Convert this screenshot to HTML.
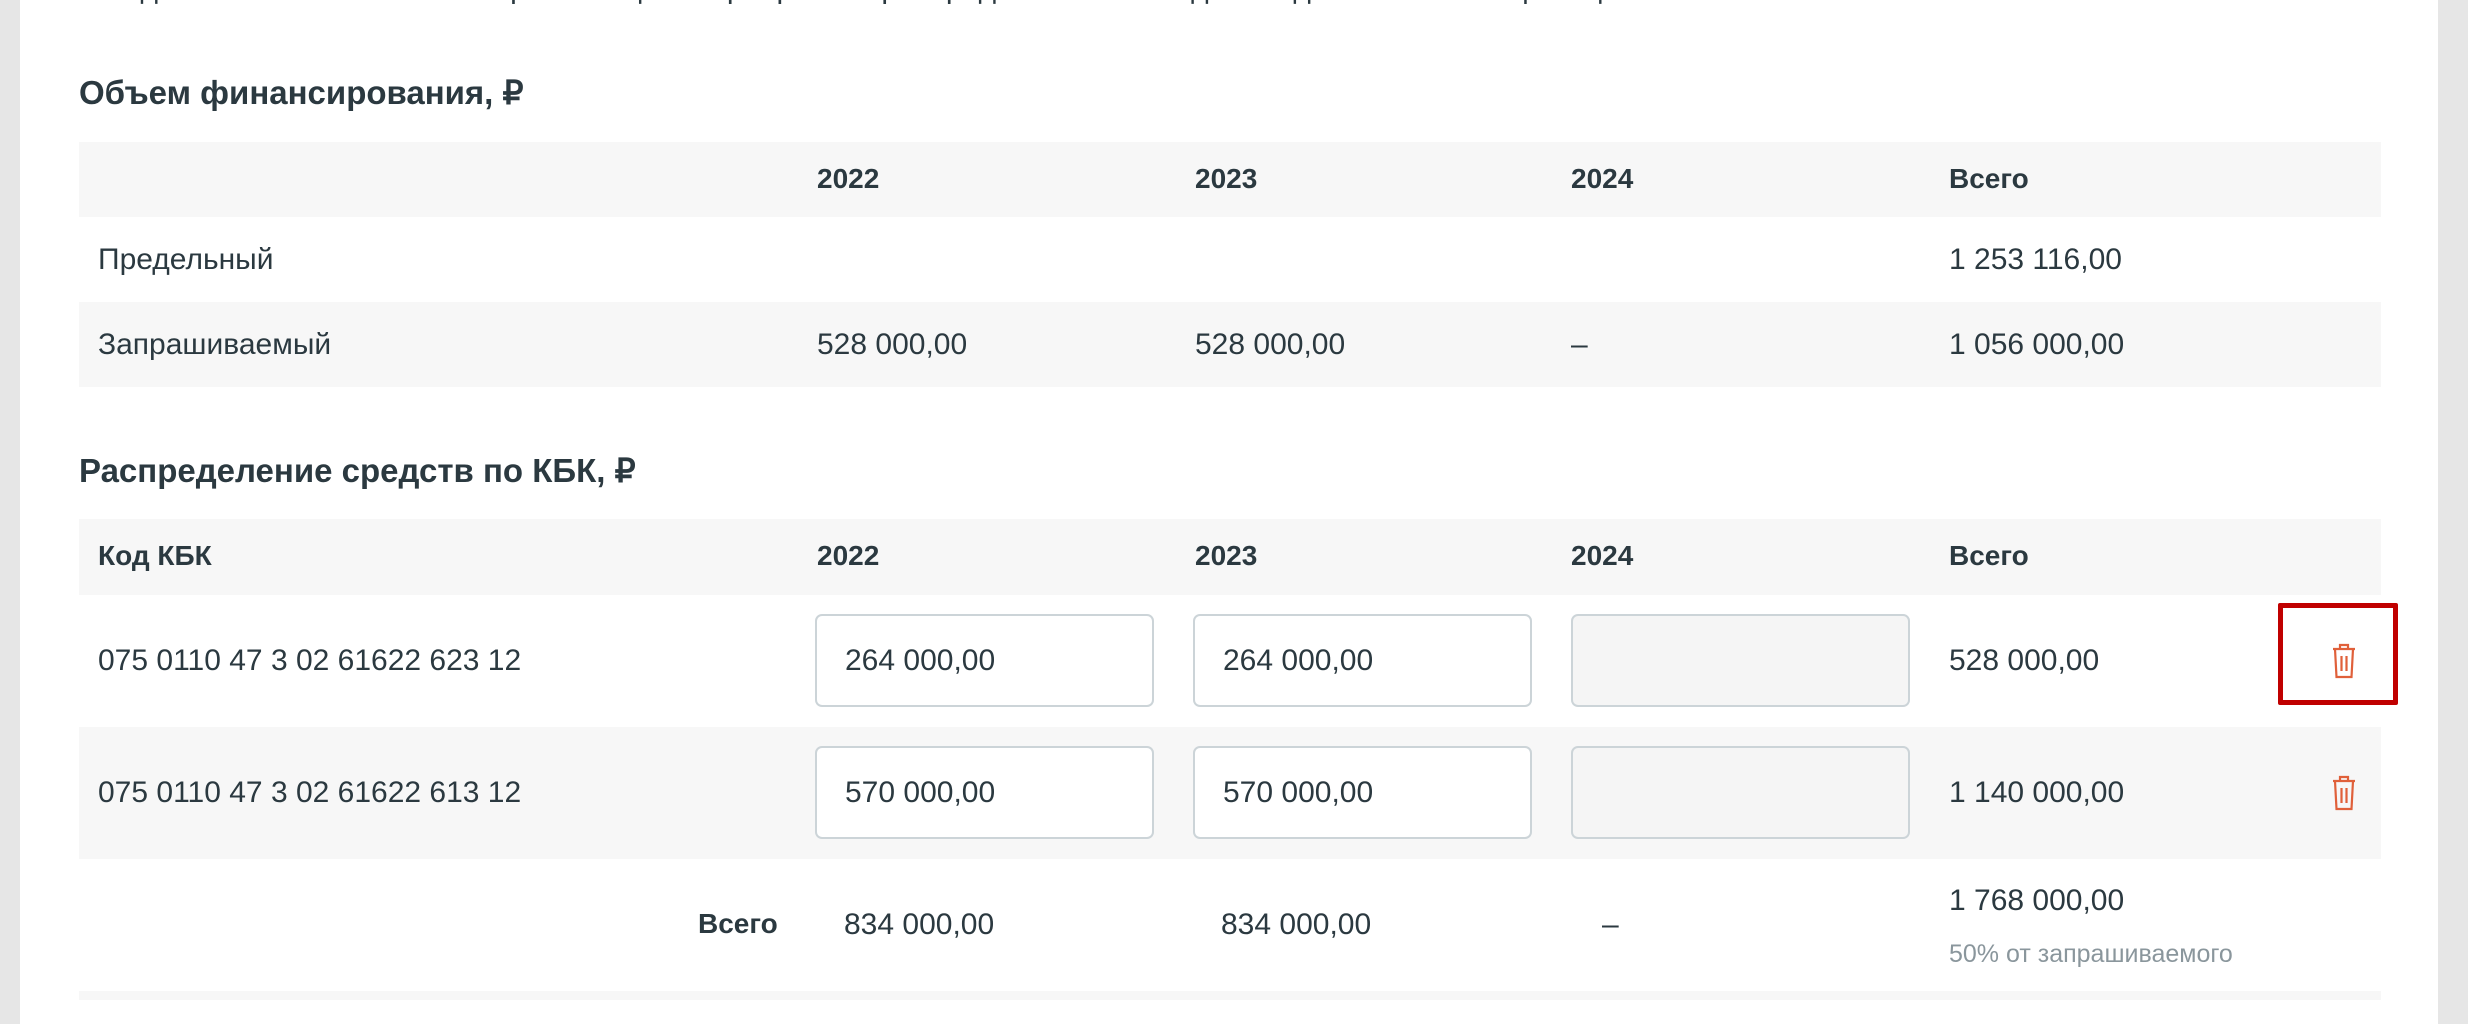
<!DOCTYPE html>
<html><head><meta charset="utf-8"><style>
*{margin:0;padding:0;box-sizing:border-box}
body{width:2468px;height:1024px;background:#e6e6e6;font-family:"Liberation Sans",sans-serif;color:#2b3940;position:relative;overflow:hidden}
.card{position:absolute;left:20px;top:0;width:2418px;height:1024px;background:#fff}
.a{position:absolute;white-space:nowrap}
.t{font-weight:bold;font-size:33px}
.b{font-size:30px}
.h{font-weight:bold;font-size:28px}
.g{background:#f7f7f7;position:absolute;left:79px;width:2302px}
.in{position:absolute;width:339px;height:93px;border:2px solid #ccd4d8;border-radius:7px;background:#fff;font-size:30px;padding-left:28px;line-height:89px}
.in.d{background:#f5f5f5}
</style></head><body>
<div class="card">
<div class="a b" style="left:79px;top:-28px;color:#2b3940">Бюджетные ассигнования на реализацию мероприятия распределяются по кодам бюджетной классификации</div>
<div class="a t" style="left:59px;top:73px">Объем финансирования, ₽</div>
<div class="g" style="top:142px;height:75px;left:59px"></div>
<div class="g" style="top:302px;height:85px;left:59px"></div>
<div class="a h" style="left:797px;top:163px">2022</div>
<div class="a h" style="left:1175px;top:163px">2023</div>
<div class="a h" style="left:1551px;top:163px">2024</div>
<div class="a h" style="left:1929px;top:163px">Всего</div>
<div class="a b" style="left:78px;top:243px">Предельный</div>
<div class="a b" style="left:1929px;top:243px">1 253 116,00</div>
<div class="a b" style="left:78px;top:328px">Запрашиваемый</div>
<div class="a b" style="left:797px;top:328px">528 000,00</div>
<div class="a b" style="left:1175px;top:328px">528 000,00</div>
<div class="a b" style="left:1551px;top:328px">–</div>
<div class="a b" style="left:1929px;top:328px">1 056 000,00</div>

<div class="a t" style="left:59px;top:451px">Распределение средств по КБК, ₽</div>
<div class="g" style="top:519px;height:76px;left:59px"></div>
<div class="g" style="top:727px;height:132px;left:59px"></div>
<div class="g" style="top:991px;height:9px;left:59px"></div>
<div class="a h" style="left:78px;top:540px">Код КБК</div>
<div class="a h" style="left:797px;top:540px">2022</div>
<div class="a h" style="left:1175px;top:540px">2023</div>
<div class="a h" style="left:1551px;top:540px">2024</div>
<div class="a h" style="left:1929px;top:540px">Всего</div>

<div class="a b" style="left:78px;top:644px">075 0110 47 3 02 61622 623 12</div>
<div class="in" style="left:795px;top:614px">264 000,00</div>
<div class="in" style="left:1173px;top:614px">264 000,00</div>
<div class="in d" style="left:1551px;top:614px"></div>
<div class="a b" style="left:1929px;top:644px">528 000,00</div>

<div class="a b" style="left:78px;top:776px">075 0110 47 3 02 61622 613 12</div>
<div class="in" style="left:795px;top:746px">570 000,00</div>
<div class="in" style="left:1173px;top:746px">570 000,00</div>
<div class="in d" style="left:1551px;top:746px"></div>
<div class="a b" style="left:1929px;top:776px">1 140 000,00</div>

<div class="a h" style="left:678px;top:908px">Всего</div>
<div class="a b" style="left:824px;top:908px">834 000,00</div>
<div class="a b" style="left:1201px;top:908px">834 000,00</div>
<div class="a b" style="left:1582px;top:908px">–</div>
<div class="a b" style="left:1929px;top:884px">1 768 000,00</div>
<div class="a" style="left:1929px;top:940px;font-size:25px;color:#8a969c">50% от запрашиваемого</div>

<div class="a" style="left:2258px;top:603px;width:120px;height:102px;border:5px solid #c00000;border-radius:2px"></div>
<svg class="a" style="left:2311px;top:643px" width="26" height="36" viewBox="0 0 26 36" fill="none" stroke="#e0603a" stroke-width="2.2"><path d="M9 6V2h8v4M2 6h22M4 6l1.5 28h15L22 6M10.5 13v15M15.5 13v15"/></svg>
<svg class="a" style="left:2311px;top:775px" width="26" height="36" viewBox="0 0 26 36" fill="none" stroke="#e0603a" stroke-width="2.2"><path d="M9 6V2h8v4M2 6h22M4 6l1.5 28h15L22 6M10.5 13v15M15.5 13v15"/></svg>
</div>
</body></html>
